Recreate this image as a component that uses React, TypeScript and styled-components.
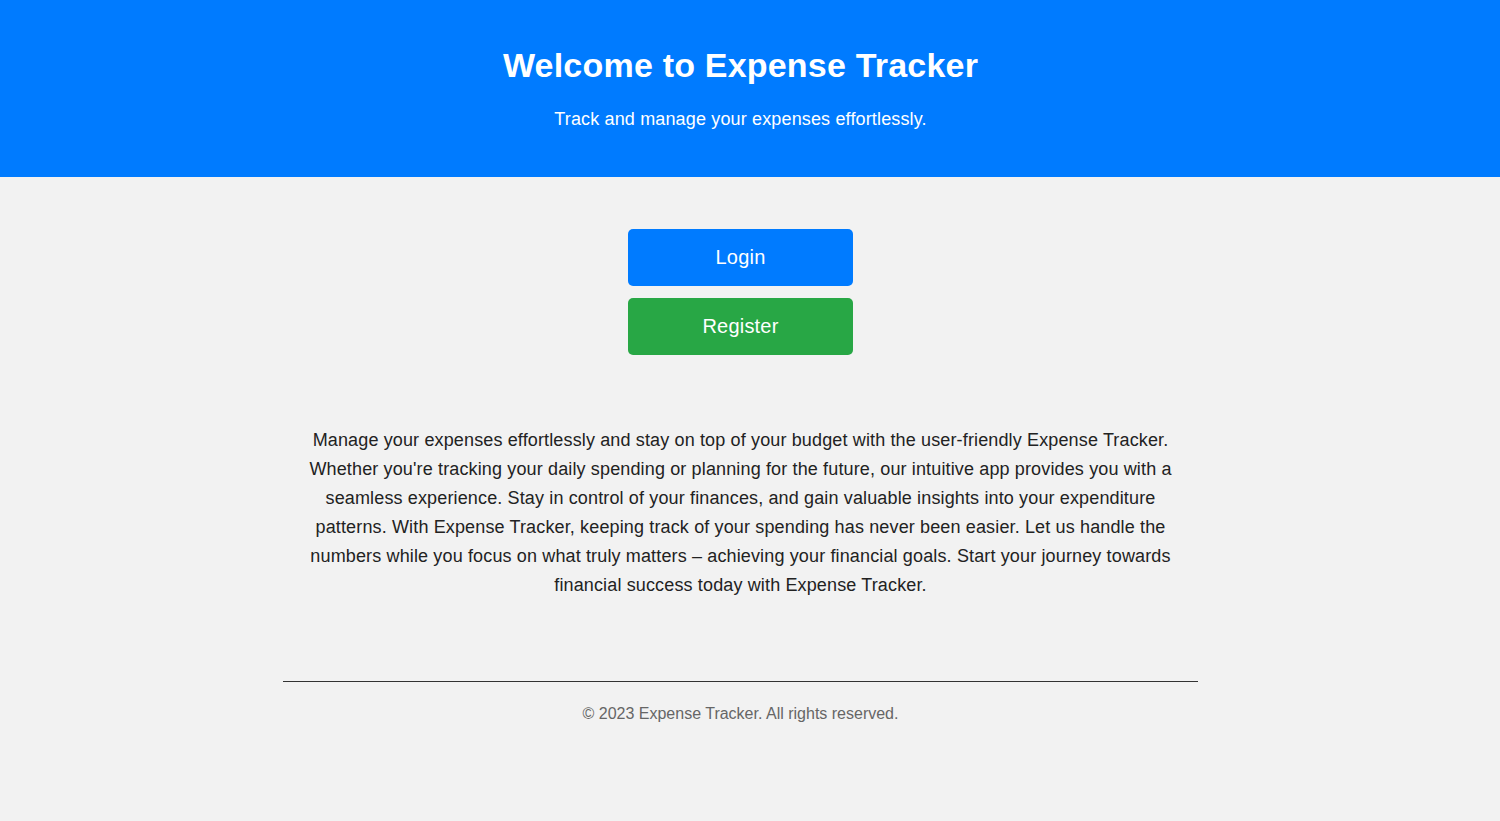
import React from 'react';
import styled, {createGlobalStyle} from 'styled-components';

const GlobalStyle = createGlobalStyle`
  html, body {
    margin: 0;
    padding: 0;
    background: #f2f2f2;
    font-family: "Liberation Sans", Arial, sans-serif;
  }
`;

// the reference was shot with a scrollbar, so content centres slightly left
const SCROLL_GUTTER = 19;

const Header = styled.header`
  background: #007bff;
  color: #fff;
  height: 177px;
  box-sizing: border-box;
  padding: 46px ${SCROLL_GUTTER}px 0 0;
  display: flex;
  flex-direction: column;
  align-items: center;
`;

const Title = styled.h1`
  margin: 0;
  font-size: 34px;
  font-weight: bold;
  line-height: 38px;
  letter-spacing: 0.2px;
`;

const Subtitle = styled.p`
  margin: 25px 0 0;
  font-size: 18px;
  line-height: 21px;
  letter-spacing: 0.15px;
`;

const Main = styled.main`
  padding: 52px ${SCROLL_GUTTER}px 0 0;
  display: flex;
  flex-direction: column;
  align-items: center;
`;

const Actions = styled.div`
  display: flex;
  flex-direction: column;
  gap: 12px;
`;

const Button = styled.button<{ $variant: 'primary' | 'success' }>`
  width: 225px;
  height: 57px;
  border: none;
  border-radius: 5px;
  background: ${p => (p.$variant === 'primary' ? '#007bff' : '#28a745')};
  color: #fff;
  font-family: "Liberation Sans", Arial, sans-serif;
  font-size: 20px;
  letter-spacing: 0.2px;
  cursor: pointer;
`;

const Intro = styled.p`
  margin: 71px 0 0;
  max-width: 880px;
  text-align: center;
  font-size: 18px;
  line-height: 29px;
  letter-spacing: 0.14px;
  color: #222;
`;

const Footer = styled.footer`
  margin: 81px auto 0;
  width: 915px;
  border-top: 1px solid #333;
  padding-top: 23px;
  text-align: center;
  color: #666;
  font-size: 16px;
  line-height: 18px;
`;

export default function App() {
    return (
        <>
            <GlobalStyle/>
            <Header>
                <Title>Welcome to Expense Tracker</Title>
                <Subtitle>Track and manage your expenses effortlessly.</Subtitle>
            </Header>
            <Main>
                <Actions>
                    <Button $variant="primary">Login</Button>
                    <Button $variant="success">Register</Button>
                </Actions>
                <Intro>
                    Manage your expenses effortlessly and stay on top of your budget with the user-friendly
                    Expense Tracker. Whether you're tracking your daily spending or planning for the future, our
                    intuitive app provides you with a seamless experience. Stay in control of your finances, and
                    gain valuable insights into your expenditure patterns. With Expense Tracker, keeping track of
                    your spending has never been easier. Let us handle the numbers while you focus on what truly
                    matters – achieving your financial goals. Start your journey towards financial success today
                    with Expense Tracker.
                </Intro>
                <Footer>© 2023 Expense Tracker. All rights reserved.</Footer>
            </Main>
        </>
    );
}
